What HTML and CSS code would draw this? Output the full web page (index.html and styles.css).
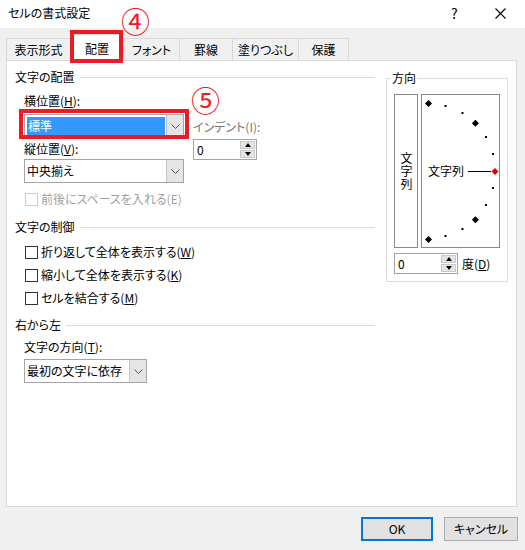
FILE: index.html
```html
<!DOCTYPE html>
<html lang="ja">
<head>
    <meta charset="utf-8">
    <title>セルの書式設定</title>
    <link rel="stylesheet" href="styles.css">
</head>
<body>
    <div class="window">
        <div class="titlebar">
            <span class="title">セルの書式設定</span>
            <span class="help">?</span>
            <span class="close">
                <svg width="11" height="11" viewBox="0 0 11 11"><path d="M0.5 0.5L10.5 10.5M10.5 0.5L0.5 10.5" stroke="#000" stroke-width="1.1" fill="none"/></svg>
            </span>
        </div>

        <div class="tabs">
            <div class="tab w64">表示形式</div>
            <div class="tab w53 active">配置</div>
            <div class="tab w56">フォント</div>
            <div class="tab w53">罫線</div>
            <div class="tab w66">塗りつぶし</div>
            <div class="tab w51 last">保護</div>
        </div>

        <div class="panel">
            <div class="left">
                <div class="group-title"><span>文字の配置</span></div>
                <div class="field-label">横位置(<u>H</u>):</div>
                <div class="row-h">
                    <div class="select w160">
                        <div class="value"><span class="hl">標準</span></div>
                        <div class="drop"><svg width="9" height="5" viewBox="0 0 9 5"><path d="M0.5 0.5L4.5 4.5L8.5 0.5" stroke="#555" fill="none"/></svg></div>
                    </div>
                    <div class="indent">
                        <div class="indent-label">インデント(I):</div>
                        <div class="spin w64">
                            <div class="spin-value">0</div>
                            <div class="spin-btns">
                                <div class="spin-btn"><span class="tri-up"></span></div>
                                <div class="spin-btn"><span class="tri-down"></span></div>
                            </div>
                        </div>
                    </div>
                </div>
                <div class="field-label gap-3">縦位置(<u>V</u>):</div>
                <div class="select w160 gap-2">
                    <div class="value">中央揃え</div>
                    <div class="drop"><svg width="9" height="5" viewBox="0 0 9 5"><path d="M0.5 0.5L4.5 4.5L8.5 0.5" stroke="#555" fill="none"/></svg></div>
                </div>
                <div class="check disabled gap-8"><span class="box"></span><span>前後にスペースを入れる(E)</span></div>

                <div class="group-title gap-12"><span>文字の制御</span></div>
                <div class="check gap-9"><span class="box"></span><span>折り返して全体を表示する(<u>W</u>)</span></div>
                <div class="check gap-7"><span class="box"></span><span>縮小して全体を表示する(<u>K</u>)</span></div>
                <div class="check gap-7"><span class="box"></span><span>セルを結合する(<u>M</u>)</span></div>

                <div class="group-title gap-11"><span>右から左</span></div>
                <div class="field-label gap-6">文字の方向(<u>T</u>):</div>
                <div class="select w123 gap-4">
                    <div class="value">最初の文字に依存</div>
                    <div class="drop"><svg width="9" height="5" viewBox="0 0 9 5"><path d="M0.5 0.5L4.5 4.5L8.5 0.5" stroke="#555" fill="none"/></svg></div>
                </div>
            </div>

            <fieldset class="orientation">
                <legend>方向</legend>
                <div class="dial-row">
                    <div class="vertical-box"><span>文字列</span></div>
                    <div class="dial">
                        <svg width="77" height="152" viewBox="0 0 77 152">
                            <text x="6" y="80.5" font-size="12" fill="#000">文字列</text>
                            <line x1="46" y1="76.5" x2="69" y2="76.5" stroke="#000" stroke-width="1"/>
                            <rect x="4" y="6" width="5" height="5" transform="rotate(45 6.5 8.5)" fill="#000"/>
                            <rect x="22.5" y="10" width="2" height="2" fill="#000"/>
                            <rect x="39.5" y="17" width="2" height="2" fill="#000"/>
                            <rect x="50.9" y="25.7" width="5" height="5" transform="rotate(45 53.4 28.2)" fill="#000"/>
                            <rect x="63" y="41" width="2" height="2" fill="#000"/>
                            <rect x="70" y="58" width="2" height="2" fill="#000"/>
                            <rect x="70.5" y="74" width="5" height="5" transform="rotate(45 73 76.5)" fill="#e00000"/>
                            <rect x="70" y="92" width="2" height="2" fill="#000"/>
                            <rect x="63" y="109" width="2" height="2" fill="#000"/>
                            <rect x="50.9" y="122.3" width="5" height="5" transform="rotate(45 53.4 124.8)" fill="#000"/>
                            <rect x="39.5" y="133" width="2" height="2" fill="#000"/>
                            <rect x="22.5" y="140" width="2" height="2" fill="#000"/>
                            <rect x="4" y="142" width="5" height="5" transform="rotate(45 6.5 144.5)" fill="#000"/>
                        </svg>
                    </div>
                </div>
                <div class="degree-row">
                    <div class="spin w64">
                        <div class="spin-value">0</div>
                        <div class="spin-btns">
                            <div class="spin-btn"><span class="tri-up"></span></div>
                            <div class="spin-btn"><span class="tri-down"></span></div>
                        </div>
                    </div>
                    <span class="degree-label">度(<u>D</u>)</span>
                </div>
            </fieldset>
        </div>

        <div class="buttons">
            <div class="button default">OK</div>
            <div class="button">キャンセル</div>
        </div>

        <div class="mark mark-tab"></div>
        <div class="mark mark-select"></div>
        <div class="num num-4">④</div>
        <div class="num num-5">⑤</div>
    </div>
</body>
</html>
```

FILE: styles.css
```css
* {
    box-sizing: border-box;
}

body {
    margin: 0;
    background: #f0f0f0;
    font-family: "Noto Sans CJK JP", sans-serif;
    font-size: 12px;
    line-height: 16px;
    font-feature-settings: "palt";
    color: #000;
}

.window {
    position: relative;
    width: 525px;
    height: 550px;
    overflow: hidden;
}

/* title bar */
.titlebar {
    display: flex;
    align-items: center;
    height: 28px;
    background: #fff;
    padding: 0 0 2px 8px;
}
.title {
    flex: 1;
}
.help {
    width: 44px;
    font-size: 14px;
}
.close {
    display: flex;
    width: 30px;
}

/* tabs */
.tabs {
    display: flex;
    margin: 10px 0 0 6px;
    height: 22px;
}
.tab {
    border-top: 1px solid #d9d9d9;
    border-left: 1px solid #d9d9d9;
    text-align: center;
    line-height: 21px;
}
.tab.last {
    border-right: 1px solid #d9d9d9;
}
.tab.active {
    position: relative;
    background: #fff;
    margin-top: -4px;
    height: 27px;
    line-height: 28px;
}
.w64 { width: 64px; }
.w53 { width: 53px; }
.w56 { width: 56px; }
.w66 { width: 66px; }
.w51 { width: 51px; }

/* panel */
.panel {
    display: flex;
    gap: 11px;
    width: 511px;
    height: 447px;
    margin-left: 6px;
    background: #fff;
    border: 1px solid #d9d9d9;
    padding: 0 8px 0 8px;
}
.left {
    width: 360px;
}

.group-title {
    display: flex;
    align-items: center;
    margin-top: 8px;
}
.group-title::after {
    content: "";
    flex: 1;
    border-top: 1px solid #dcdcdc;
    margin-left: 5px;
}

.field-label {
    padding-left: 9px;
    margin-top: 8px;
}

.gap-2 { margin-top: 2px; }
.gap-3 { margin-top: 3px; }
.gap-4 { margin-top: 4px; }
.gap-6 { margin-top: 6px; }
.gap-7 { margin-top: 7px; }
.gap-8 { margin-top: 8px; }
.gap-9 { margin-top: 9px; }
.gap-11 { margin-top: 11px; }
.gap-12 { margin-top: 12px; }

.row-h {
    display: flex;
    gap: 9px;
    margin-top: 5px;
}

/* combo boxes */
.select {
    display: flex;
    height: 24px;
    margin-left: 9px;
    border: 1px solid #a5a5a5;
    background: #fff;
}
.select.w160 { width: 160px; }
.select.w123 { width: 123px; }
.select .value {
    flex: 1;
    padding: 2px 1px 2px 2px;
    line-height: 18px;
}
.select .hl {
    display: block;
    height: 18px;
    padding-left: 1px;
    background: #3399ff;
    color: #fff;
}
.select .drop {
    display: flex;
    align-items: center;
    justify-content: center;
    width: 17px;
    background: #e5e5e5;
    border-left: 1px solid #c4c4c4;
}

/* indent */
.indent {
    height: 24px;
    padding-top: 5px;
}
.indent-label {
    color: #777;
}
.spin {
    display: flex;
    height: 21px;
    margin-top: 4px;
    border: 1px solid #a5a5a5;
    background: #fff;
}
.spin.w64 { width: 64px; }
.spin-value {
    flex: 1;
    padding-left: 3px;
    line-height: 19px;
}
.spin-btns {
    display: flex;
    flex-direction: column;
    width: 16px;
    padding: 1px 1px 1px 0;
    gap: 1px;
}
.spin-btn {
    flex: 1;
    display: flex;
    align-items: center;
    justify-content: center;
    background: #e5e5e5;
    border: 1px solid #c8c8c8;
}
.tri-up {
    border-left: 3px solid transparent;
    border-right: 3px solid transparent;
    border-bottom: 4px solid #000;
}
.tri-down {
    border-left: 3px solid transparent;
    border-right: 3px solid transparent;
    border-top: 4px solid #000;
}

/* check boxes */
.check {
    display: flex;
    align-items: center;
    gap: 3px;
    padding-left: 10px;
}
.check .box {
    width: 13px;
    height: 13px;
    border: 1px solid #333;
    background: #fff;
}
.check.disabled {
    color: #a0a0a0;
}
.check.disabled .box {
    border-color: #cccccc;
}

/* orientation */
.orientation {
    margin: 9px 0 0 0;
    padding: 0 6px 6px 7px;
    width: 122px;
    height: 212px;
    border: 1px solid #dcdcdc;
    min-inline-size: 0;
}
.orientation legend {
    padding: 0 1px;
    margin-left: -3px;
    line-height: 16px;
}
.dial-row {
    display: flex;
    gap: 3px;
    margin-top: 8px;
}
.vertical-box {
    display: flex;
    align-items: center;
    justify-content: center;
    width: 24px;
    height: 154px;
    border: 1px solid #8a8a8a;
}
.vertical-box span {
    writing-mode: vertical-rl;
    line-height: 12px;
    letter-spacing: 1px;
}
.dial {
    width: 79px;
    height: 154px;
    border: 1px solid #8a8a8a;
}
.dial svg {
    display: block;
}
.degree-row {
    display: flex;
    align-items: center;
    gap: 4px;
    margin-top: 5px;
}
.degree-row .spin {
    margin-top: 0;
}

/* buttons */
.buttons {
    display: flex;
    justify-content: flex-end;
    gap: 11px;
    margin-top: 10px;
    padding-right: 7px;
}
.button {
    width: 74px;
    height: 24px;
    line-height: 22px;
    text-align: center;
    background: #e1e1e1;
    border: 1px solid #adadad;
}
.button.default {
    width: 72px;
    border: 2px solid #0078d7;
    line-height: 20px;
}

/* red annotations */
.mark {
    position: absolute;
    border: 4px solid #ed1c24;
}
.mark-tab {
    left: 70px;
    top: 30px;
    width: 53px;
    height: 33px;
}
.mark-select {
    left: 19px;
    top: 109px;
    width: 170px;
    height: 30px;
}
.num {
    position: absolute;
    color: #ed1c24;
    font-size: 29px;
    line-height: 29px;
}
.num-4 {
    left: 121px;
    top: 6px;
}
.num-5 {
    left: 191px;
    top: 85px;
}
```
